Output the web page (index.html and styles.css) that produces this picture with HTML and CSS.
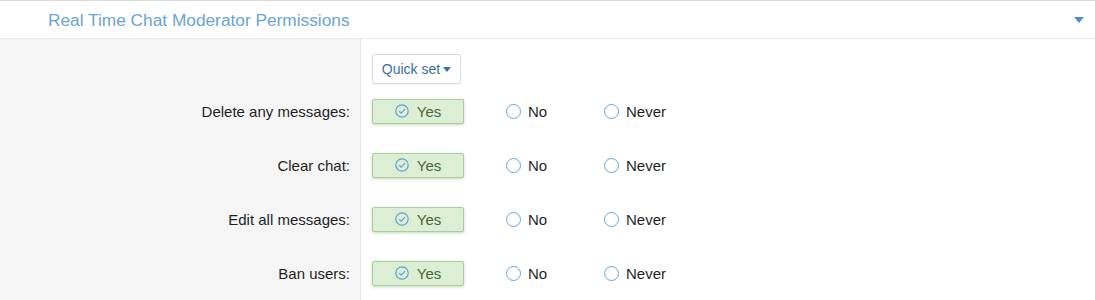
FILE: index.html
```html
<!DOCTYPE html>
<html>
<head>
<meta charset="utf-8">
<link rel="stylesheet" href="styles.css">
</head>
<body>
<div class="section">
  <div class="header">
    <span class="title">Real Time Chat Moderator Permissions</span>
    <svg class="arrow" width="10" height="6" viewBox="0 0 10 6"><path d="M0 0H10L5 6Z" fill="#4a8fd4"/></svg>
  </div>
  <div class="perm-body">
    <div class="lbl lbl-top"></div>
    <div class="ctl ctl-top"><button class="quick">Quick set <svg width="8" height="5" viewBox="0 0 8 5"><path d="M0 0H8L4 5Z" fill="#3a6ea8"/></svg></button></div>

    <div class="lbl">Delete any messages:</div>
    <div class="ctl">
      <div class="opt-yes"><span class="yes"><svg width="14" height="14" viewBox="0 0 14 14"><circle cx="7" cy="7" r="6.2" fill="none" stroke="#5f9fd6" stroke-width="1.2"/><path d="M4.2 7.2L6.2 9.1L9.9 5.1" fill="none" stroke="#5f9fd6" stroke-width="1.2"/></svg>Yes</span></div>
      <div class="opt opt-no"><span class="radio"></span>No</div>
      <div class="opt"><span class="radio"></span>Never</div>
    </div>

    <div class="lbl">Clear chat:</div>
    <div class="ctl">
      <div class="opt-yes"><span class="yes"><svg width="14" height="14" viewBox="0 0 14 14"><circle cx="7" cy="7" r="6.2" fill="none" stroke="#5f9fd6" stroke-width="1.2"/><path d="M4.2 7.2L6.2 9.1L9.9 5.1" fill="none" stroke="#5f9fd6" stroke-width="1.2"/></svg>Yes</span></div>
      <div class="opt opt-no"><span class="radio"></span>No</div>
      <div class="opt"><span class="radio"></span>Never</div>
    </div>

    <div class="lbl">Edit all messages:</div>
    <div class="ctl">
      <div class="opt-yes"><span class="yes"><svg width="14" height="14" viewBox="0 0 14 14"><circle cx="7" cy="7" r="6.2" fill="none" stroke="#5f9fd6" stroke-width="1.2"/><path d="M4.2 7.2L6.2 9.1L9.9 5.1" fill="none" stroke="#5f9fd6" stroke-width="1.2"/></svg>Yes</span></div>
      <div class="opt opt-no"><span class="radio"></span>No</div>
      <div class="opt"><span class="radio"></span>Never</div>
    </div>

    <div class="lbl">Ban users:</div>
    <div class="ctl">
      <div class="opt-yes"><span class="yes"><svg width="14" height="14" viewBox="0 0 14 14"><circle cx="7" cy="7" r="6.2" fill="none" stroke="#5f9fd6" stroke-width="1.2"/><path d="M4.2 7.2L6.2 9.1L9.9 5.1" fill="none" stroke="#5f9fd6" stroke-width="1.2"/></svg>Yes</span></div>
      <div class="opt opt-no"><span class="radio"></span>No</div>
      <div class="opt"><span class="radio"></span>Never</div>
    </div>
  </div>
</div>
</body>
</html>
```

FILE: styles.css
```css
html, body {
  margin: 0;
  padding: 0;
  background: #fff;
  font-family: "Liberation Sans", Arial, sans-serif;
  color: #1d1d1d;
  overflow: hidden;
}
.section {
  border-top: 1px solid #dcdcdc;
}
.header {
  height: 37px;
  border-bottom: 1px solid #e6e6e6;
  display: flex;
  align-items: center;
  justify-content: space-between;
  padding: 0 11px 0 48px;
}
.title {
  font-size: 17.3px;
  color: #6aa3d8;
  margin-top: 1px;
}
.perm-body {
  display: grid;
  grid-template-columns: 361px 1fr;
  grid-template-rows: 45px;
  grid-auto-rows: 54px;
}
.lbl {
  background: #f5f5f5;
  border-right: 1px solid #e3e3e3;
  box-sizing: border-box;
  display: flex;
  align-items: center;
  justify-content: flex-end;
  padding-right: 10px;
  font-size: 15px;
  color: #1f1f1f;
}
.ctl {
  display: flex;
  align-items: center;
  padding-left: 11px;
}
.ctl-top {
  align-items: flex-start;
  padding-top: 15px;
  box-sizing: border-box;
}
.quick {
  height: 30px;
  width: 89px;
  background: #fff;
  border: 1px solid #dadada;
  border-radius: 3px;
  box-shadow: 0 1px 2px rgba(0,0,0,0.06);
  font-family: "Liberation Sans", Arial, sans-serif;
  font-size: 14px;
  color: #3a6ea8;
  display: flex;
  align-items: center;
  justify-content: center;
  gap: 3px;
  padding: 0;
}
.opt-yes {
  width: 134px;
}
.yes {
  box-sizing: border-box;
  width: 92px;
  height: 25px;
  display: flex;
  align-items: center;
  justify-content: center;
  gap: 8px;
  background: #dcefd4;
  border: 1px solid #a7cf97;
  border-radius: 2px;
  box-shadow: 0 1px 3px rgba(90,140,80,0.35);
  font-size: 15px;
  color: #46673e;
}
.opt {
  display: flex;
  align-items: center;
  gap: 7px;
  font-size: 15px;
  color: #1f1f1f;
}
.opt-no {
  width: 98px;
}
.radio {
  box-sizing: border-box;
  width: 15px;
  height: 15px;
  border: 1.3px solid #6aa3d8;
  border-radius: 50%;
  background: #fff;
}
```
